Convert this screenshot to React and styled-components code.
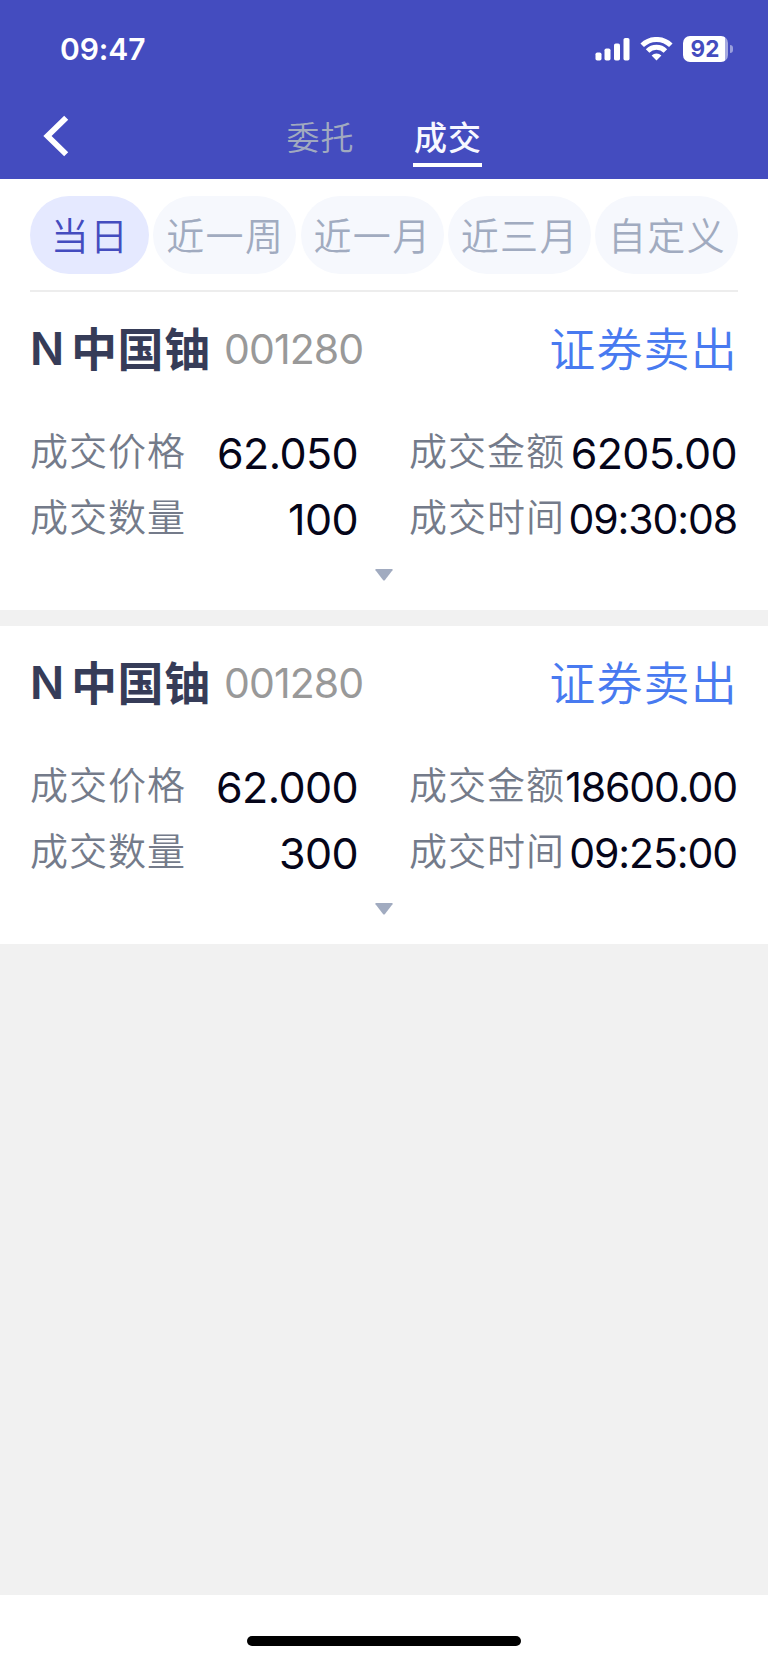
import React from "react";
import styled, { createGlobalStyle } from "styled-components";

const Global = createGlobalStyle`
  * { box-sizing: border-box; }
  body {
    margin: 0;
    background: #f1f1f1;
    font-family: Inter, "Noto Sans CJK SC", sans-serif;
  }
  button { font: inherit; border: 0; padding: 0; margin: 0; background: none; }
`;

const Screen = styled.div`
  width: 768px;
  height: 1663px;
  display: flex;
  flex-direction: column;
  background: #f1f1f1;
  overflow: hidden;
  white-space: nowrap;
`;

const Header = styled.header`
  height: 179px;
  background: #444cbf;
  color: #fff;
`;

const StatusBar = styled.div`
  height: 98px;
  padding: 0 35px 0 60px;
  display: flex;
  align-items: center;
  justify-content: space-between;
`;

const Clock = styled.span`
  font-size: 30px;
  font-weight: 600;
  letter-spacing: -0.1px;
`;

const StatusIcons = styled.div`
  display: flex;
  align-items: center;
`;

const SignalIcon = styled.svg`
  margin-right: 10px;
`;

const WifiIcon = styled.svg`
  margin-right: 10px;
`;

const Battery = styled.div`
  width: 45px;
  height: 26px;
  border-radius: 7px;
  background: linear-gradient(to right, #fff 42px, #a5a9e0 42px);
  color: #444cbf;
  font-size: 22.5px;
  font-weight: 650;
  line-height: 26px;
  padding-right: 1px;
  text-align: center;
`;

const BatteryTip = styled.div`
  width: 3px;
  height: 8px;
  margin-left: 2px;
  border-radius: 0 3px 3px 0;
  background: #9a9fdc;
`;

const NavBar = styled.nav`
  height: 81px;
  padding-left: 43px;
  display: flex;
`;

const BackButton = styled.button`
  width: 26px;
  height: 42px;
  margin: 17px 217px 0 0;
  color: #fff;
`;

const NavTab = styled.button`
  height: 69px;
  width: 69px;
  margin-right: 58px;
  padding: 14px 0 0 ${(p) => (p.$active ? 1 : 0)}px;
  font-size: 33px;
  line-height: 48px;
  letter-spacing: 1px;
  font-weight: ${(p) => (p.$active ? 500 : 350)};
  color: ${(p) => (p.$active ? "#f7f8ff" : "#a1aabf")};
  border-bottom: 4px solid ${(p) => (p.$active ? "#fff" : "transparent")};
`;

const Filters = styled.div`
  height: 113px;
  padding: 17px 30px 0;
  background: #fff;
`;

const FilterRow = styled.div`
  height: 96px;
  display: flex;
  justify-content: space-between;
  border-bottom: 2px solid #ededed;
`;

const Pill = styled.button`
  width: ${(p) => (p.$active ? 119 : 143)}px;
  height: 78px;
  border-radius: 39px;
  background: ${(p) => (p.$active ? "#e5e9ff" : "#f6f8fd")};
  color: ${(p) => (p.$active ? "#444cbf" : "#a1abc0")};
  font-size: 38px;
  font-weight: 350;
  letter-spacing: 1.3px;
  line-height: 80px;
  padding-left: 1px;
  text-align: center;
`;

const Card = styled.article`
  height: 318px;
  margin-bottom: ${(p) => (p.$last ? 0 : 16)}px;
  padding: 0 30px;
  background: #fff;
`;

const CardHead = styled.div`
  height: 115px;
  padding-bottom: 1px;
  display: flex;
  align-items: center;
  line-height: 60px;
`;

const StockName = styled.span`
  width: 194px;
  display: flex;
  gap: 9px;
  color: #363c58;
  font-size: 46px;
  font-weight: 700;
  letter-spacing: 0.6px;
`;

const NewListingMark = styled.span`
  width: 32px;
  font-size: 45px;
  font-weight: 600;
`;

const StockCode = styled.span`
  color: #999;
  font-size: 41px;
  font-weight: 400;
  letter-spacing: -0.9px;
`;

const Side = styled.span`
  margin-left: auto;
  color: #487af0;
  font-size: 46px;
  font-weight: 350;
  letter-spacing: 1.2px;
`;

const Details = styled.dl`
  margin: 0;
  padding-top: 9px;
  display: grid;
  grid-template-columns: 329px 329px;
  grid-auto-rows: 66px;
  column-gap: 50px;
`;

const Field = styled.div`
  display: flex;
  justify-content: space-between;
  align-items: center;
`;

const Label = styled.dt`
  margin-top: 4px;
  color: #747b8a;
  font-size: 38px;
  font-weight: 350;
  letter-spacing: 1px;
  line-height: 56px;
`;

const Value = styled.dd`
  margin: 8px 1px 0 0;
  color: #050519;
  font-size: ${(p) => (p.$compact ? 41 : 43)}px;
  letter-spacing: ${(p) => (p.$compact ? -1.1 : -0.6)}px;
  line-height: 56px;
`;

const Expand = styled.button`
  display: block;
  width: 18px;
  height: 12px;
  margin: 21px auto 0;
  color: #a1abc0;
`;

const Footer = styled.footer`
  height: 68px;
  margin-top: auto;
  padding-top: 41px;
  background: #fff;
`;

const HomeIndicator = styled.div`
  width: 274px;
  height: 10px;
  margin: 0 auto;
  border-radius: 5px;
  background: #000;
`;

const filters = ["当日", "近一周", "近一月", "近三月", "自定义"];

const trades = [
  {
    price: "62.050",
    amount: "6205.00",
    count: "100",
    time: "09:30:08",
  },
  {
    price: "62.000",
    amount: "18600.00",
    count: "300",
    time: "09:25:00",
  },
];

function DetailField({ label, value }) {
  return (
    <Field>
      <Label>{label}</Label>
      <Value $compact={value.length > 7}>{value}</Value>
    </Field>
  );
}

function TradeCard({ trade, last }) {
  return (
    <Card $last={last}>
      <CardHead>
        <StockName>
          <NewListingMark>N</NewListingMark>
          中国铀
        </StockName>
        <StockCode>001280</StockCode>
        <Side>证券卖出</Side>
      </CardHead>
      <Details>
        <DetailField label="成交价格" value={trade.price} />
        <DetailField label="成交金额" value={trade.amount} />
        <DetailField label="成交数量" value={trade.count} />
        <DetailField label="成交时间" value={trade.time} />
      </Details>
      <Expand aria-label="展开">
        <svg width="18" height="12" viewBox="0 0 18 12" display="block">
          <path d="M0.8 0H17.2Q18 0.3 17.5 1.2L9.8 11.2Q9 12 8.2 11.2L0.5 1.2Q0 0.3 0.8 0Z" fill="currentColor" />
        </svg>
      </Expand>
    </Card>
  );
}

export default function App() {
  return (
    <Screen>
      <Global />
      <Header>
        <StatusBar>
          <Clock>09:47</Clock>
          <StatusIcons>
            <SignalIcon width="35" height="24" viewBox="0 0 35 24" fill="#fff">
              <rect x="0.5" y="15.5" width="6" height="8" rx="1.8" />
              <rect x="9.5" y="11.5" width="6" height="12" rx="1.8" />
              <rect x="19" y="6.5" width="6" height="17" rx="1.8" />
              <rect x="28.5" y="1" width="6" height="22.5" rx="1.8" />
            </SignalIcon>
            <WifiIcon width="33" height="24" viewBox="0 0 33 24" fill="none" stroke="#fff" strokeWidth="5">
              <path d="M2.2 8.3A20.4 20.4 0 0 1 30.8 8.3" />
              <path d="M7.6 14A12.6 12.6 0 0 1 25.4 14" />
              <path d="M16.5 23.5L11.6 18.4A7 7 0 0 1 21.4 18.4Z" fill="#fff" stroke="none" />
            </WifiIcon>
            <Battery>92</Battery>
            <BatteryTip />
          </StatusIcons>
        </StatusBar>
        <NavBar>
          <BackButton aria-label="返回">
            <svg width="26" height="42" viewBox="0 0 26 42" display="block">
              <path d="M23.2 2.7L4.5 21L23.2 39.3" fill="none" stroke="currentColor" strokeWidth="5.8" />
            </svg>
          </BackButton>
          <NavTab>委托</NavTab>
          <NavTab $active>成交</NavTab>
        </NavBar>
      </Header>
      <Filters>
        <FilterRow>
          {filters.map((name, i) => (
            <Pill key={name} $active={i === 0}>
              {name}
            </Pill>
          ))}
        </FilterRow>
      </Filters>
      {trades.map((trade, i) => (
        <TradeCard key={trade.time} trade={trade} last={i === trades.length - 1} />
      ))}
      <Footer>
        <HomeIndicator />
      </Footer>
    </Screen>
  );
}
